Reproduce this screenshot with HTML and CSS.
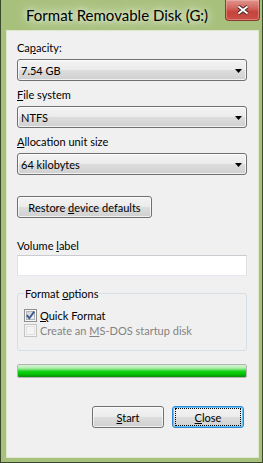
FILE: index.html
```html
<!DOCTYPE html>
<html>
<head>
<meta charset="utf-8">
<title>Format Removable Disk (G:)</title>
<link rel="stylesheet" href="styles.css">
</head>
<body>
<div class="window">
  <div class="titlebar">
    <span class="title">Format Removable Disk (G:)</span>
    <div class="close-x">
      <svg width="12" height="10" viewBox="0 0 12 10">
        <path d="M1.5 1.5 L10.5 8.5 M10.5 1.5 L1.5 8.5" stroke="#3a1c18" stroke-width="3.6" fill="none"/>
        <path d="M1.5 1.5 L10.5 8.5 M10.5 1.5 L1.5 8.5" stroke="#ffffff" stroke-width="2" fill="none"/>
      </svg>
    </div>
  </div>
  <div class="client">
    <div class="lbl">Ca<u>p</u>acity:</div>
    <div class="combo"><span>7.54 GB</span><svg class="arrow" width="7" height="4" viewBox="0 0 7 4"><polygon points="0,0 7,0 3.5,4" fill="#000"/></svg></div>
    <div class="lbl"><u>F</u>ile system</div>
    <div class="combo"><span>NTFS</span><svg class="arrow" width="7" height="4" viewBox="0 0 7 4"><polygon points="0,0 7,0 3.5,4" fill="#000"/></svg></div>
    <div class="lbl"><u>A</u>llocation unit size</div>
    <div class="combo"><span>64 kilobytes</span><svg class="arrow" width="7" height="4" viewBox="0 0 7 4"><polygon points="0,0 7,0 3.5,4" fill="#000"/></svg></div>
    <div class="btn restore"><span>Restore <u>d</u>evice defaults</span></div>
    <div class="lbl vol">Volume <u>l</u>abel</div>
    <div class="textbox"></div>
    <fieldset class="group">
      <legend>Format <u>o</u>ptions</legend>
      <div class="check">
        <svg class="cb" width="13" height="13" viewBox="0 0 13 13">
          <defs><linearGradient id="cbg" x1="0" y1="0" x2="1" y2="1"><stop offset="0" stop-color="#cbd0d8"/><stop offset="1" stop-color="#f6f7f9"/></linearGradient></defs>
          <rect x="0.5" y="0.5" width="12" height="12" fill="#f6f6f6" stroke="#8e8f8f"/>
          <rect x="2.5" y="2.5" width="8" height="8" fill="url(#cbg)" stroke="#aeb3b9"/>
          <path d="M2.8 6.2 L5.3 9.2 L10.2 2.6" stroke="#3f5a8e" stroke-width="1.9" fill="none"/>
        </svg>
        <span><u>Q</u>uick Format</span>
      </div>
      <div class="check disabled">
        <svg class="cb" width="13" height="13" viewBox="0 0 13 13">
          <rect x="0.5" y="0.5" width="12" height="12" fill="#f4f4f4" stroke="#c4c4c4"/>
          <rect x="2.5" y="2.5" width="8" height="8" fill="#f4f4f4" stroke="#e2e2e2"/>
        </svg>
        <span>Create an <u>M</u>S-DOS startup disk</span>
      </div>
    </fieldset>
    <div class="progress"><div class="fill"></div></div>
    <div class="buttons">
      <div class="btn"><span><u>S</u>tart</span></div>
      <div class="btn default"><span class="focus"><span><u>C</u>lose</span></span></div>
    </div>
  </div>
</div>
</body>
</html>
```
FILE: styles.css
```css
* { box-sizing: border-box; }
html, body { margin: 0; padding: 0; }
body {
  width: 263px;
  height: 463px;
  overflow: hidden;
  font-family: Lato, "Liberation Sans", sans-serif;
  font-size: 11px;
  color: #000;
  background: #a7c07b;
}
u { text-decoration: underline; text-underline-offset: 1px; }

.window {
  width: 263px;
  height: 463px;
  background: #a7c07b;
  border: 1px solid #39472a;
  border-top: 0;
  display: flex;
  flex-direction: column;
}

.titlebar {
  height: 30px;
  flex: none;
  display: flex;
  align-items: flex-start;
}
.title {
  font-size: 15px;
  line-height: 20px;
  margin: 5px 0 0 25px;
  white-space: nowrap;
  text-shadow: 0 0 6px rgba(255,255,255,0.9), 0 0 12px rgba(240,246,228,0.95), 0 0 20px rgba(225,236,205,0.95);
}
.close-x {
  margin-left: auto;
  margin-right: 2px;
  width: 35px;
  height: 21px;
  border: 1px solid #8c3a33;
  border-top: 0;
  border-radius: 0 0 4px 4px;
  background: linear-gradient(#de958e 0%, #d2675f 40%, #c4433b 60%, #c95149 100%);
  box-shadow: inset 0 0 0 1px rgba(255,210,200,0.35);
  display: flex;
  align-items: center;
  justify-content: center;
}

.client {
  flex: 1;
  margin: 0 3px 4px 5px;
  border: 1px solid #dde7cc;
  background: #f0f0f0;
  padding: 9px 11px 0 10px;
  display: flex;
  flex-direction: column;
}

.lbl {
  line-height: 15px;
  margin-bottom: 4px;
  white-space: nowrap;
}
.combo + .lbl { margin-top: 6px; }

.combo {
  height: 22px;
  border: 1px solid #707070;
  border-radius: 3px;
  background: linear-gradient(#f3f3f3 0%, #ebebeb 50%, #dddddd 50%, #d0d0d0 100%);
  box-shadow: inset 0 0 0 1px rgba(255,255,255,0.7);
  display: flex;
  align-items: center;
  justify-content: space-between;
  padding: 0 4px 0 3px;
  line-height: 15px;
}
.arrow { margin-top: 1px; }

.btn {
  height: 22px;
  border: 1px solid #707070;
  border-radius: 3px;
  background: linear-gradient(#f3f3f3 0%, #ebebeb 50%, #dddddd 50%, #d0d0d0 100%);
  box-shadow: inset 0 0 0 1px rgba(255,255,255,0.7);
  display: flex;
  align-items: center;
  justify-content: center;
  line-height: 15px;
  white-space: nowrap;
}
.restore {
  margin-top: 21px;
  width: 135px;
  align-self: flex-start;
}

.lbl.vol {
  margin-top: 20px;
  margin-bottom: 2px;
}
.textbox {
  height: 21px;
  background: #fff;
  border: 1px solid;
  border-color: #c9cbd0 #dde1e6 #e3e9ef #dfe1e6;
  border-radius: 1px;
}

.group {
  margin: 10px 0 0;
  padding: 7px 6px 12px;
  border: 1px solid #d5dfe5;
  border-radius: 3px;
  min-width: 0;
}
.group legend {
  padding: 0 1px;
  line-height: 15px;
}
.check {
  height: 15px;
  display: flex;
  align-items: center;
  line-height: 15px;
  white-space: nowrap;
}
.cb { flex: none; margin-right: 3px; }
.check.disabled { color: #838383; }

.progress {
  margin-top: 13px;
  height: 14px;
  border: 1px solid #b4b4b4;
  border-radius: 2px;
  background: #e6e6e6;
  overflow: hidden;
}
.fill {
  height: 100%;
  width: 100%;
  background: linear-gradient(#d0f5d0 0%, #b2eeb2 25%, #55dd55 42%, #0fd00f 55%, #07c707 72%, #06a806 88%, #0b8f0b 100%);
}

.buttons {
  margin-top: 28px;
  margin-right: 3px;
  display: flex;
  justify-content: flex-end;
  gap: 8px;
}
.buttons .btn { width: 72px; }
.btn.default {
  border-color: #2f86d6;
  box-shadow: inset 0 0 0 1px #67c5f5;
}
.focus {
  display: flex;
  align-items: center;
  justify-content: center;
  width: 64px;
  height: 16px;
  outline: 1px dotted #000;
}
```
